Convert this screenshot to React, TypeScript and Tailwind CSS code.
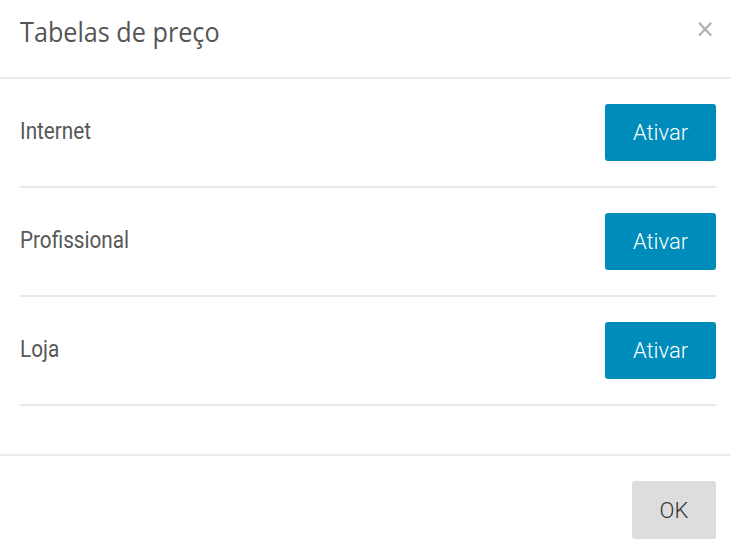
import React from "react";

const rows = ["Internet", "Profissional", "Loja"];

export default function App() {
  return (
    <div className="w-[731px] h-[552px] bg-white flex flex-col overflow-hidden" style={{ fontFamily: "Roboto, 'Liberation Sans', sans-serif" }}>
      <div className="h-[79px] border-b-2 border-[#ebebeb] flex items-start justify-between pl-[20px] pr-[16px] pt-[12px] shrink-0">
        <h1 className="inline-block origin-left scale-x-[0.9] text-[28px] leading-[38px] text-[#555555] font-normal whitespace-nowrap" style={{ fontFamily: "'Open Sans', sans-serif" }}>
          Tabelas de preço
        </h1>
        <button className="text-[24px] leading-[24px] text-[#b0b0b0] mt-[5px]" style={{ fontFamily: "'DejaVu Sans', sans-serif" }}>×</button>
      </div>
      <div className="pl-[20px] pr-[15px] pb-[48px] shrink-0">
        {rows.map((r) => (
          <div key={r} className="flex items-center justify-between py-[25px] border-b-2 border-[#e8e8e8]">
            <span className="inline-block origin-left scale-x-[0.9] text-[23px] text-[#585858] whitespace-nowrap">{r}</span>
            <button className="w-[111px] h-[57px] rounded-[3px] bg-[#008cba] text-white text-[22px] font-light">
              Ativar
            </button>
          </div>
        ))}
      </div>
      <div className="border-t-2 border-[#ebebeb] flex justify-end pl-[20px] pr-[15px] pt-[25px]">
        <button className="w-[84px] h-[58px] rounded-[3px] bg-[#dddddd] text-[#333333] text-[22px] font-light">
          OK
        </button>
      </div>
    </div>
  );
}
